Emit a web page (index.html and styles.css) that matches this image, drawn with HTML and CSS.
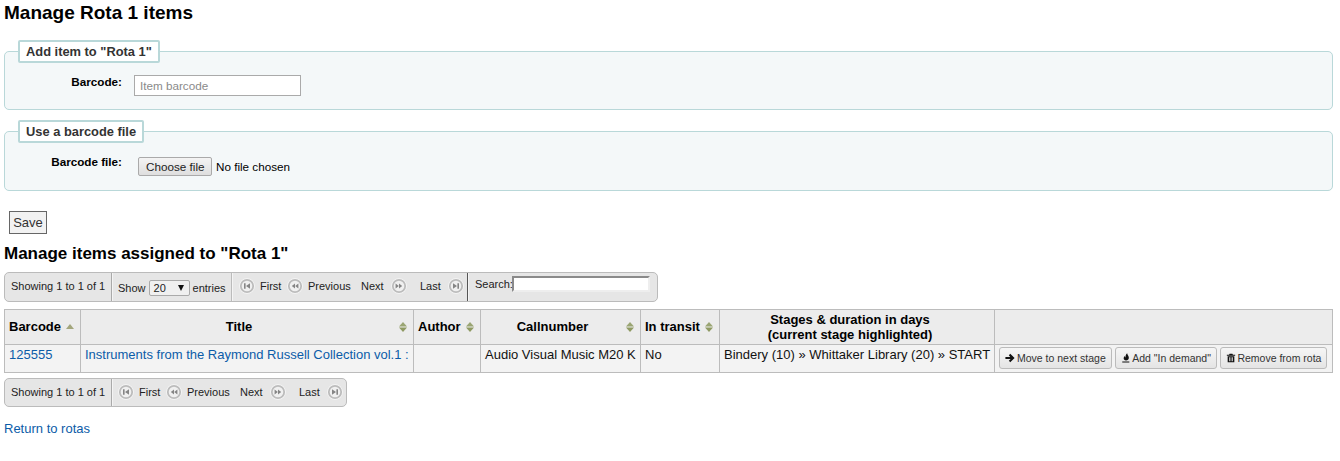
FILE: index.html
```html
<!DOCTYPE html>
<html lang="en">
<head>
<meta charset="utf-8">
<title>Manage Rota 1 items</title>
<link rel="stylesheet" href="styles.css">
</head>
<body>
<svg class="defs" width="0" height="0" aria-hidden="true">
  <symbol id="pg-ring" viewBox="0 0 16 16"><circle cx="8" cy="8" r="7.800" fill="#f8f8f8"/><circle cx="8" cy="8" r="6.200" fill="#f0f0f0" stroke="#bcbcbc" stroke-width="1.800"/></symbol>
  <symbol id="pg-first" viewBox="0 0 16 16"><use href="#pg-ring" width="16" height="16"/><path d="M5 5.200h1.600v5.600H5zM11 5.200v5.600L7 8z" fill="#858585"/></symbol>
  <symbol id="pg-prev" viewBox="0 0 16 16"><use href="#pg-ring" width="16" height="16"/><path d="M8 5.400v5.200L4.800 8zM11.400 5.400v5.200L8.200 8z" fill="#858585"/></symbol>
  <symbol id="pg-next" viewBox="0 0 16 16"><use href="#pg-ring" width="16" height="16"/><path d="M4.600 5.400v5.200L7.800 8zM8 5.400v5.200L11.200 8z" fill="#858585"/></symbol>
  <symbol id="pg-last" viewBox="0 0 16 16"><use href="#pg-ring" width="16" height="16"/><path d="M5 5.200v5.600L9 8zM9.400 5.200H11v5.600H9.400z" fill="#858585"/></symbol>
  <symbol id="sort-both" viewBox="0 0 8 10"><path d="M4 0 8 4.400H0z" fill="#9aa573"/><path d="M0 5.600h8L4 10z" fill="#8f9a62"/></symbol>
  <symbol id="sort-asc" viewBox="0 0 8 5"><path d="M4 0 8 5H0z" fill="#a3a67c"/></symbol>
</svg>
<main class="page">
  <h1 class="title">Manage Rota 1 items</h1>
  <form class="rota-form">
    <fieldset class="box box-barcode">
      <legend class="box-legend">Add item to "Rota 1"</legend>
      <div class="field">
        <label class="field-label" for="barcode">Barcode:</label>
        <input class="text-input" id="barcode" type="text" placeholder="Item barcode">
      </div>
    </fieldset>
    <fieldset class="box box-file">
      <legend class="box-legend">Use a barcode file</legend>
      <div class="field">
        <span class="field-label">Barcode file:</span>
        <span class="file-picker"><button class="file-button" type="button">Choose file</button><span class="file-name">No file chosen</span></span>
      </div>
    </fieldset>
    <div class="form-actions"><button class="save" type="button">Save</button></div>
  </form>

  <h2 class="subtitle">Manage items assigned to "Rota 1"</h2>

  <div class="pager pager-top">
    <div class="pager-cell info">Showing 1 to 1 of 1</div>
    <div class="pager-cell length">Show
      <span class="select-box"><span>20</span><i class="select-arrow"></i></span>
      entries</div>
    <div class="pager-cell links">
      <a class="pg pg-first"><svg class="pg-icon"><use href="#pg-first"/></svg>First</a>
      <a class="pg pg-prev"><svg class="pg-icon"><use href="#pg-prev"/></svg>Previous</a>
      <a class="pg pg-next">Next<svg class="pg-icon"><use href="#pg-next"/></svg></a>
      <a class="pg pg-last">Last<svg class="pg-icon"><use href="#pg-last"/></svg></a>
    </div>
    <div class="pager-cell search"><label class="search-label">Search:</label><input class="search-input" type="text" aria-label="Search"></div>
  </div>

  <table class="items">
    <colgroup>
      <col class="c1"><col class="c2"><col class="c3"><col class="c4"><col class="c5"><col class="c6"><col class="c7">
    </colgroup>
    <thead>
      <tr>
        <th class="th-left"><span class="th-in">Barcode<svg class="sort sort-up"><use href="#sort-asc"/></svg></span></th>
        <th><span class="th-in"><span class="th-text">Title</span><svg class="sort"><use href="#sort-both"/></svg></span></th>
        <th class="th-left"><span class="th-in">Author<svg class="sort"><use href="#sort-both"/></svg></span></th>
        <th><span class="th-in"><span class="th-text">Callnumber</span><svg class="sort"><use href="#sort-both"/></svg></span></th>
        <th class="th-left"><span class="th-in">In transit<svg class="sort"><use href="#sort-both"/></svg></span></th>
        <th class="th-stages">Stages &amp; duration in days<br>(current stage highlighted)</th>
        <th></th>
      </tr>
    </thead>
    <tbody>
      <tr>
        <td><a class="link" href="#">125555</a></td>
        <td><a class="link" href="#">Instruments from the Raymond Russell Collection vol.1 :</a></td>
        <td></td>
        <td>Audio Visual Music M20 K</td>
        <td>No</td>
        <td>Bindery (10) » Whittaker Library (20) » START</td>
        <td class="actions">
          <div class="action-row">
            <a class="btn"><svg class="btn-icon" viewBox="0 0 12 12"><path d="M6.300 1 11.500 6l-5.200 5-1.700-1.700 2.200-2.100H.5V4.800h5.800L4.600 2.700z" fill="#111"/></svg>Move to next stage</a>
            <a class="btn"><svg class="btn-icon" viewBox="0 0 12 12"><path d="M7.400.4c.3 2.300 2 3.300 2 5.300 0 2-1.500 3.400-3.400 3.400-1.600 0-2.800-1.100-2.800-2.700 0-1.200.6-2.100 1.400-2.800 0 .9.3 1.400.8 1.700C5.300 3.400 6 1.600 7.400.4zM1.500 10.200h8.500v1.300H1.500z" fill="#111"/></svg>Add "In demand"</a>
            <a class="btn"><svg class="btn-icon" viewBox="0 0 12 12"><path fill-rule="evenodd" d="M4.300.8h3.400l.6 1.200H11v1.200H1V2h2.700zM2 4h8v7.200H2zM3.600 5.200v4.800h.9V5.200zM5.550 5.200v4.800h.9V5.200zM7.500 5.200v4.800h.9V5.200z" fill="#111"/></svg>Remove from rota</a>
          </div>
        </td>
      </tr>
    </tbody>
  </table>

  <div class="pager pager-bottom">
    <div class="pager-cell info">Showing 1 to 1 of 1</div>
    <div class="pager-cell links">
      <a class="pg pg-first"><svg class="pg-icon"><use href="#pg-first"/></svg>First</a>
      <a class="pg pg-prev"><svg class="pg-icon"><use href="#pg-prev"/></svg>Previous</a>
      <a class="pg pg-next">Next<svg class="pg-icon"><use href="#pg-next"/></svg></a>
      <a class="pg pg-last">Last<svg class="pg-icon"><use href="#pg-last"/></svg></a>
    </div>
  </div>

  <p class="back"><a class="link" href="#">Return to rotas</a></p>
</main>
</body>
</html>
```

FILE: styles.css
```css
* { box-sizing: border-box; }
html, body { margin: 0; padding: 0; background: #fff; }
body { font-family: "Liberation Sans", Arial, sans-serif; font-size: 13px; color: #000; height: 461px; overflow: hidden; }
.defs { position: absolute; }
.page { padding: 0 7px 0 4px; }
.title { margin: 0; padding-top: 2px; font-size: 19px; line-height: 21px; font-weight: bold; color: #000; }

.rota-form { display: block; }
.box { display: block; margin: 0; padding: 0 13px; background: #f4f8f9; border: 1px solid #b9d8d9; border-radius: 5px; min-width: 0; }
.box-barcode { margin-top: 17px; height: 70px; }
.box-file { margin-top: 10px; height: 71px; }
.box-legend { margin: 0; padding: 0 6px; background: #fff; border: 2px solid #b9d8d9; font-size: 12.870px; line-height: 19px; font-weight: bold; color: #333; border-radius: 2px; }
.field { display: flex; align-items: flex-start; }
.field-label { width: 104px; text-align: right; font-weight: bold; font-size: 11.700px; line-height: 14px; color: #000; }
.box-barcode .field { padding-top: 12px; }
.box-file .field { padding-top: 12px; }
.text-input { width: 167px; height: 21px; margin-left: 12px; padding: 0 5px; font: 11.700px "Liberation Sans", Arial, sans-serif; color: #000; background: #fff; border: 1px solid #aaa; border-radius: 0; margin-top: 0; }
.text-input::placeholder { color: #8a8a8a; }
.file-picker { display: inline-flex; align-items: center; margin-left: 16px; margin-top: 2px; font-size: 11.700px; color: #000; }
.file-button { height: 19px; padding: 0 7px; margin-right: 3.500px; font: 11.700px "Liberation Sans", Arial, sans-serif; background: linear-gradient(#f4f4f4, #dedede); border: 1px solid #aaa; border-radius: 2px; color: #222; }

.form-actions { padding: 20px 0 0 5px; }
.save { display: block; width: 38px; height: 23px; padding: 0; font: 13px "Liberation Sans", Arial, sans-serif; color: #333; background: #f2f2f2; border: 1px solid #666; border-radius: 0; }

.subtitle { margin: 10px 0 0; font-size: 17px; line-height: 20px; font-weight: bold; color: #000; }

.pager { display: flex; align-items: stretch; height: 30px; background: #e6e6e6; border: 1px solid #bbb; border-radius: 5px; font-size: 11px; color: #222; }
.pager-top { margin-top: 8px; width: 654px; }
.pager-bottom { margin-top: 5px; width: 343px; height: 29px; }
.pager-cell { display: flex; align-items: center; padding: 0 6px 1px; border-left: 1px solid #f4f4f4; white-space: nowrap; }
.pager-cell.info { width: 107px; border-left: 0; border-right: 1px solid #aaa; padding-bottom: 3px; }
.length { width: 120px; padding: 2px 5px 0; border-right: 1px solid #bbb; gap: 3px; }
.select-box { display: inline-flex; align-items: center; justify-content: space-between; width: 41px; height: 16px; padding: 0 5px 0 4px; background: #f0f0f0; border: 1px solid #aaa; border-radius: 2px; color: #222; }
.select-arrow { width: 0; height: 0; border-left: 3.500px solid transparent; border-right: 3.500px solid transparent; border-top: 6px solid #111; }
.links { padding: 0 0 3px 6px; }
.pager-top .links { width: 236px; border-right: 1px solid #555; }
.pager-bottom .links { flex: 1; padding: 0 0 1px 5px; }
.pager-bottom .pager-cell.info { padding-bottom: 1px; }
.pg { display: inline-flex; align-items: center; color: #222; }
.pg-icon { width: 16px; height: 16px; flex: none; }
.pg-first { width: 48px; gap: 5px; }
.pg-prev { width: 74px; gap: 5px; }
.pg-next { width: 59px; gap: 7px; }
.pg-last { gap: 7px; }
.search { flex: 1; padding: 0 0 7px 6px; border-left: 1px solid #f4f4f4; }
.search-label { color: #222; }
.search-input { width: 138px; height: 16px; padding: 0 2px; margin: 0 0 0 -1px; background: #fff; border: 2px solid; border-color: #8a8a8a #eee #eee #8a8a8a; border-radius: 0; }

.items { margin-top: 7px; width: 1328px; table-layout: fixed; border-collapse: collapse; font-size: 13px; }
.c1 { width: 76px; } .c2 { width: 333px; } .c3 { width: 67px; } .c4 { width: 160px; } .c5 { width: 79px; } .c6 { width: 275px; } .c7 { width: 338px; }
.items th, .items td { border: 1px solid #bcbcbc; padding: 0 6px 0 4px; }
.items th { height: 35px; padding-bottom: 1px; background: #ececec; font-size: 13px; line-height: 15px; font-weight: bold; color: #000; text-align: center; }
.items th.th-left { text-align: left; }
.items th.th-stages { padding-right: 18px; }
.items td { height: 28px; padding-top: 2px; background: #f3f3f3; color: #111; white-space: nowrap; vertical-align: top; line-height: 15px; }
.th-in { display: flex; align-items: center; justify-content: space-between; }
.th-text { flex: 1; text-align: center; padding-right: 2px; }
.sort { width: 8px; height: 10px; flex: none; margin-left: 4px; }
.sort-up { width: 8px; height: 5px; margin-left: 5px; margin-right: 0; }
.link { color: #0b5ca8; text-decoration: none; }

.items td.actions { padding: 2px 0 0 4px; }
.action-row { display: flex; gap: 3.500px; }
.btn { display: flex; align-items: center; gap: 2px; height: 22px; padding: 0 5px; font-size: 10.500px; line-height: 12px; color: #333; background: linear-gradient(#f6f6f6, #e4e4e4); border: 1px solid #bbb; border-radius: 3px; }
.btn + .btn { gap: 1px; }
.btn-icon { width: 10px; height: 10px; flex: none; }

.back { margin: 14px 0 0; font-size: 13px; line-height: 15px; }
```
